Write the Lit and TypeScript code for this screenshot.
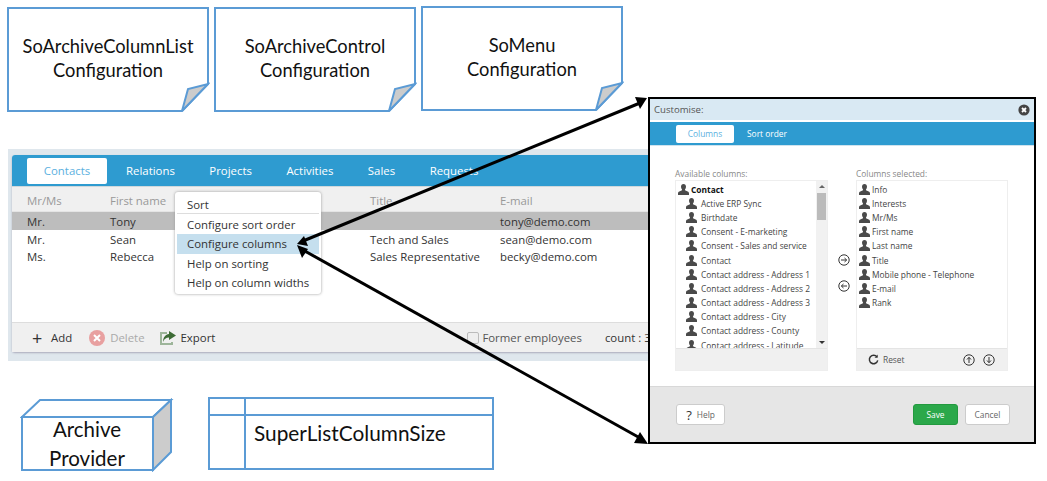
import {css, html, LitElement, svg} from 'lit';
import {customElement} from 'lit/decorators.js';

const person = html`<svg class="person" viewBox="0 0 11 11"><path d="M5.5 0C3.9 0 3 1.2 3 2.8c0 1.1.4 2 1 2.6v.9L1.3 7.6C.5 8 0 8.6 0 9.4V11h11V9.4c0-.8-.5-1.4-1.3-1.8L7 6.3v-.9c.6-.6 1-1.5 1-2.6C8 1.2 7.1 0 5.5 0z"/></svg>`;

const circleIcon = (inner: unknown) => html`<svg class="circle-icon" viewBox="0 0 12 12"><circle cx="6" cy="6" r="5.2"/>${inner}</svg>`;
const arrowRight = svg`<path d="M3 6h5.5M6.5 4 8.7 6 6.5 8"/>`;
const arrowLeft = svg`<path d="M9 6H3.5M5.5 4 3.3 6l2.2 2"/>`;
const arrowUp = svg`<path d="M6 9V3.5M4 5.5 6 3.3l2 2.2"/>`;
const arrowDown = svg`<path d="M6 3v5.5M4 6.5 6 8.7l2-2.2"/>`;

const TABS = ['Relations', 'Projects', 'Activities', 'Sales', 'Requests'];
const ROWS = [
  ['Mr.', 'Tony', '', 'tony@demo.com'],
  ['Mr.', 'Sean', 'Tech and Sales', 'sean@demo.com'],
  ['Ms.', 'Rebecca', 'Sales Representative', 'becky@demo.com'],
];
const AVAILABLE = [
  'Active ERP Sync', 'Birthdate', 'Consent - E-marketing', 'Consent - Sales and service', 'Contact',
  'Contact address - Address 1', 'Contact address - Address 2', 'Contact address - Address 3',
  'Contact address - City', 'Contact address - County', 'Contact address - Latitude',
];
const SELECTED = ['Info', 'Interests', 'Mr/Ms', 'First name', 'Last name', 'Title', 'Mobile phone - Telephone', 'E-mail', 'Rank'];

@customElement('app-root')
export class AppRoot extends LitElement {
  static override styles = css`
    :host {
      display: block;
      width: 1047px;
      height: 481px;
      background: #fff;
      overflow: hidden;
    }
    .canvas {
      position: relative;
      width: 1047px;
      height: 481px;
      font-family: 'Open Sans', 'Noto Sans', sans-serif;
      overflow: hidden;
    }

    /* diagram shapes */
    .node {
      position: absolute;
      display: flex;
      align-items: center;
      justify-content: center;
      text-align: center;
      font-family: Lato, 'Liberation Sans', sans-serif;
      font-size: 18.3px;
      line-height: 24px;
      color: #111;
    }
    .node svg {
      position: absolute;
      inset: 0;
      width: 100%;
      height: 100%;
    }
    .node span { position: relative; }
    .shape { fill: #fff; stroke: #5b9bd5; stroke-width: 2; }
    .fold { fill: #ccc; stroke: #5b9bd5; stroke-width: 2; }
    .note { width: 204px; height: 108px; padding-bottom: 2px; box-sizing: border-box; }
    .n1 { left: 6px; top: 5px; }
    .n2 { left: 213px; top: 5px; }
    .n3 { left: 420px; top: 4px; }
    .cube {
      left: 20px;
      top: 398px;
      width: 154px;
      height: 74px;
      box-sizing: border-box;
      padding: 18px 20px 0 0;
      font-size: 20.5px;
      line-height: 29px;
    }
    .tbl {
      left: 207px;
      top: 396px;
      width: 288px;
      height: 75px;
      box-sizing: border-box;
      padding: 0 0 2px 47px;
      justify-content: flex-start;
      font-size: 20.8px;
    }

    /* archive screenshot */
    .panel {
      position: absolute;
      left: 8px;
      top: 149px;
      width: 642px;
      height: 212px;
      background: #dfe7ed;
      padding: 6px 0 0 4px;
      box-sizing: border-box;
    }
    .card {
      position: relative;
      height: 197px;
      border-radius: 3px 0 0 3px;
      background: #fff;
      display: flex;
      flex-direction: column;
      box-shadow: 0 1px 2px #aab;
      font-size: 11.4px;
      color: #333;
    }
    .tabs {
      height: 31px;
      flex: none;
      background: #2e9bd0;
      border-radius: 3px 0 0 0;
      display: flex;
      align-items: center;
      padding-left: 15px;
      color: #fff;
      border-bottom: 1px solid #cfd8dc;
    }
    .tab { margin-right: 34.5px; }
    .tab.active {
      width: 80px;
      height: 26px;
      margin-right: 19px;
      background: #fff;
      color: #5bb0e0;
      border-radius: 2px;
      display: flex;
      align-items: center;
      justify-content: center;
    }
    .grid-row {
      display: grid;
      grid-template-columns: 83px 260px 130px 1fr;
      padding-left: 15px;
      align-items: center;
      white-space: nowrap;
    }
    .head { height: 25px; flex: none; background: #f0f0f0; color: #999; border-bottom: 1px solid #e4e4e4; box-sizing: border-box; padding-top: 2px; }
    .row { height: 17.7px; flex: none; padding-top: 1px; box-sizing: border-box; }
    .row.selected { background: #bdbdbd; }
    .spacer { flex: 1; }
    .foot {
      height: 29px;
      flex: none;
      background: #f0f0f0;
      border-top: 1px solid #ddd;
      display: flex;
      align-items: center;
      padding-left: 20px;
      white-space: nowrap;
    }
    .foot .act { display: flex; align-items: center; gap: 5px; margin-right: 17px; }
    .foot .muted { color: #aaa; margin-right: 15px; }
    .plus { font-size: 18px; line-height: 14px; width: 12px; margin-right: 2px; }
    .foot svg { width: 16px; height: 16px; }
    .check {
      width: 10px;
      height: 10px;
      border: 1px solid #bbb;
      border-radius: 2px;
      background: #eee;
      margin: 0 3px 0 235px;
      flex: none;
    }
    .former { color: #555; margin-right: 23px; }
    .count { white-space: nowrap; }
    .menu {
      position: absolute;
      left: 163px;
      top: 37px;
      width: 146px;
      height: 102px;
      box-sizing: border-box;
      background: #fff;
      border-radius: 3px;
      box-shadow: 0 0 3px #999;
      padding-top: 3px;
      white-space: nowrap;
    }
    .menu div { height: 19px; line-height: 19px; padding-left: 10px; margin: 0 2px; }
    .menu .first { border-bottom: 1px solid #ddd; height: 18px; margin-bottom: 1px; }
    .menu .hi { background: #c5dfee; height: 20px; line-height: 20px; }

    /* customise dialog */
    .dialog {
      position: absolute;
      left: 648px;
      top: 97px;
      width: 388px;
      height: 347px;
      box-sizing: border-box;
      border: 2px solid #000;
      background: #fff;
      display: flex;
      flex-direction: column;
      font-size: 8.4px;
      color: #444;
    }
    .dlg-title {
      height: 21px;
      flex: none;
      background: #d9e9f3;
      display: flex;
      align-items: center;
      justify-content: space-between;
      padding: 0 4px 0 4px;
      font-size: 9.6px;
      color: #555;
      margin-bottom: 2px;
    }
    .close { width: 12px; height: 12px; }
    .dlg-tabs {
      height: 23px;
      flex: none;
      background: #2e9bd0;
      display: flex;
      align-items: center;
      padding-left: 26px;
      color: #fff;
      border-bottom: 1px solid #cfe3ee;
    }
    .dlg-tab {
      width: 58px;
      height: 18px;
      background: #fff;
      color: #5bb0e0;
      border-radius: 2px;
      display: flex;
      align-items: center;
      justify-content: center;
      margin-right: 13px;
    }
    .dlg-body {
      flex: 1;
      display: flex;
      align-items: flex-start;
      padding: 21px 0 0 25px;
    }
    .col-label { color: #888; height: 13px; line-height: 13px; }
    .box {
      width: 153px;
      height: 191px;
      box-sizing: border-box;
      border: 1px solid #eee;
      display: flex;
      flex-direction: column;
    }
    .box.right { width: 152px; }
    .box-main { height: 167px; flex: none; display: flex; overflow: hidden; }
    .items { flex: 1; padding-top: 1px; overflow: hidden; }
    .item { height: 14.2px; display: flex; align-items: center; gap: 4px; padding-left: 10px; white-space: nowrap; color: #444; }
    .item.top { padding-left: 2px; gap: 2px; font-weight: 700; color: #111; }
    .right .item { padding-left: 2px; gap: 2px; }
    .person { width: 11px; height: 11px; fill: #4a4a4a; flex: none; }
    .scroll {
      width: 11px;
      flex: none;
      background: #f1f1f1;
      display: flex;
      flex-direction: column;
      align-items: center;
      justify-content: space-between;
      padding: 4px 0;
      box-sizing: border-box;
      position: relative;
    }
    .tri-up { border: 3px solid transparent; border-top: 0; border-bottom: 3px solid #666; }
    .tri-down { border: 3px solid transparent; border-bottom: 0; border-top: 3px solid #333; }
    .thumb { position: absolute; left: 1px; top: 12px; width: 9px; height: 27px; background: #bbb; }
    .box-foot {
      flex: 1;
      background: #f0f0f0;
      border-top: 1px solid #e4e4e4;
      display: flex;
      align-items: center;
      padding: 0 8px 0 11px;
      gap: 4px;
      color: #555;
    }
    .box-foot .reset { width: 11px; height: 11px; fill: none; stroke: #333; stroke-width: 1.6; }
    .box-foot .gap { flex: 1; }
    .box-foot .circle-icon { margin-right: 4px; }
    .movers {
      width: 28px;
      flex: none;
      height: 191px;
      display: flex;
      flex-direction: column;
      align-items: center;
      gap: 14px;
      padding: 74px 0 0 3px;
      box-sizing: border-box;
    }
    .circle-icon { width: 12px; height: 12px; fill: none; stroke: #333; stroke-width: 1; flex: none; }
    .dlg-foot {
      height: 56px;
      flex: none;
      background: #e6e6e6;
      border-top: 1px solid #d8d8d8;
      box-sizing: border-box;
      display: flex;
      align-items: flex-start;
      padding: 17px 24px 0 26px;
      gap: 7px;
    }
    .btn {
      height: 21px;
      box-sizing: border-box;
      border: 1px solid #ccc;
      border-radius: 3px;
      background: #fff;
      display: flex;
      align-items: center;
      justify-content: center;
      color: #666;
    }
    .btn.help { width: 49px; gap: 5px; margin-right: auto; }
    .btn.help b { font-size: 13px; font-weight: 400; color: #333; }
    .btn.save { width: 45px; background: #2ba84a; border-color: #239a3f; color: #fff; }
    .btn.cancel { width: 45px; }

    .arrows { position: absolute; inset: 0; width: 1047px; height: 481px; pointer-events: none; }
  `;

  private renderNote(cls: string, lines: string[]) {
    return html`<div class="node note ${cls}">
      <svg viewBox="0 0 204 108">
        <path class="shape" d="M2 3H202V79L176 106H2Z" />
        <path class="fold" d="M176 106 182 84 202 79Z" />
      </svg>
      <span>${lines[0]}<br />${lines[1]}</span>
    </div>`;
  }

  private renderCard() {
    return html`<div class="panel">
      <div class="card">
        <div class="tabs">
          <div class="tab active">Contacts</div>
          ${TABS.map((t) => html`<div class="tab">${t}</div>`)}
        </div>
        <div class="grid-row head"><span>Mr/Ms</span><span>First name</span><span>Title</span><span>E-mail</span></div>
        ${ROWS.map((r, i) => html`<div class="grid-row row ${i === 0 ? 'selected' : ''}">${r.map((c) => html`<span>${c}</span>`)}</div>`)}
        <div class="spacer"></div>
        <div class="foot">
          <div class="act"><span class="plus">+</span>Add</div>
          <div class="act muted">
            <svg viewBox="0 0 16 16"><circle cx="8" cy="8" r="8" fill="#e8a0a0" /><path d="M5 5l6 6M11 5l-6 6" stroke="#fff" stroke-width="2" /></svg>
            Delete
          </div>
          <div class="act">
            <svg viewBox="0 0 16 16"><path d="M0 2h7v2H2v9h9v-1h2v3H0z" fill="#9db59a" /><path d="M9 1l7 4.5L9 10V7.5C6 7.5 4 9 3 12c0-4.5 2.5-7.5 6-8z" fill="#3d6b35" /></svg>
            Export
          </div>
          <div class="check"></div>
          <span class="former">Former employees</span>
          <span class="count">count : 3</span>
        </div>
        <div class="menu">
          <div class="first">Sort</div>
          <div>Configure sort order</div>
          <div class="hi">Configure columns</div>
          <div>Help on sorting</div>
          <div>Help on column widths</div>
        </div>
      </div>
    </div>`;
  }

  private renderDialog() {
    return html`<div class="dialog">
      <div class="dlg-title">
        <span>Customise:</span>
        <svg class="close" viewBox="0 0 12 12"><circle cx="6" cy="6" r="5.6" fill="#444" /><path d="M4 4l4 4M8 4l-4 4" stroke="#fff" stroke-width="1.8" /></svg>
      </div>
      <div class="dlg-tabs"><div class="dlg-tab">Columns</div><span>Sort order</span></div>
      <div class="dlg-body">
        <div>
          <div class="col-label">Available columns:</div>
          <div class="box">
            <div class="box-main">
              <div class="items">
                <div class="item top">${person}Contact</div>
                ${AVAILABLE.map((c) => html`<div class="item">${person}${c}</div>`)}
              </div>
              <div class="scroll"><i class="tri-up"></i><i class="thumb"></i><i class="tri-down"></i></div>
            </div>
            <div class="box-foot"></div>
          </div>
        </div>
        <div>
          <div class="col-label">&nbsp;</div>
          <div class="movers">${circleIcon(arrowRight)}${circleIcon(arrowLeft)}</div>
        </div>
        <div>
          <div class="col-label">Columns selected:</div>
          <div class="box right">
            <div class="box-main">
              <div class="items">${SELECTED.map((c) => html`<div class="item">${person}${c}</div>`)}</div>
            </div>
            <div class="box-foot">
              <svg class="reset" viewBox="0 0 12 12"><path d="M9.8 3.2A4.6 4.6 0 1 0 10.6 7" /><path d="M10.6 .6v3.4H7.2" fill="#333" stroke="none" /></svg>
              <span>Reset</span>
              <span class="gap"></span>
              ${circleIcon(arrowUp)}${circleIcon(arrowDown)}
            </div>
          </div>
        </div>
      </div>
      <div class="dlg-foot">
        <div class="btn help"><b>?</b>Help</div>
        <div class="btn save">Save</div>
        <div class="btn cancel">Cancel</div>
      </div>
    </div>`;
  }

  override render() {
    return html`<div class="canvas">
      ${this.renderNote('n1', ['SoArchiveColumnList', 'Configuration'])}
      ${this.renderNote('n2', ['SoArchiveControl', 'Configuration'])}
      ${this.renderNote('n3', ['SoMenu', 'Configuration'])}
      ${this.renderCard()}
      ${this.renderDialog()}
      <div class="node cube">
        <svg viewBox="0 0 154 74">
          <path class="shape" d="M2 19 20 2H151L133 19Z" />
          <path class="fold" d="M133 19 151 2V54L133 72Z" />
          <path class="shape" d="M2 19H133V72H2Z" />
        </svg>
        <span>Archive<br />Provider</span>
      </div>
      <div class="node tbl">
        <svg viewBox="0 0 288 75">
          <path class="shape" d="M2 2H286V73H2ZM38 2V73M2 19H286" />
        </svg>
        <span>SuperListColumnSize</span>
      </div>
      <svg class="arrows" viewBox="0 0 1047 481">
        <g stroke="#000" stroke-width="3" fill="none">
          <path d="M303 241 640 103" />
          <path d="M303 250 640 438" />
        </g>
        <g fill="#000">
          <path d="M297 244 304 236 308 246Z" />
          <path d="M647 98 635 97 640 109Z" />
          <path d="M297 245 308 249 302 258Z" />
          <path d="M648 444 640 432 634 443Z" />
        </g>
      </svg>
    </div>`;
  }
}
